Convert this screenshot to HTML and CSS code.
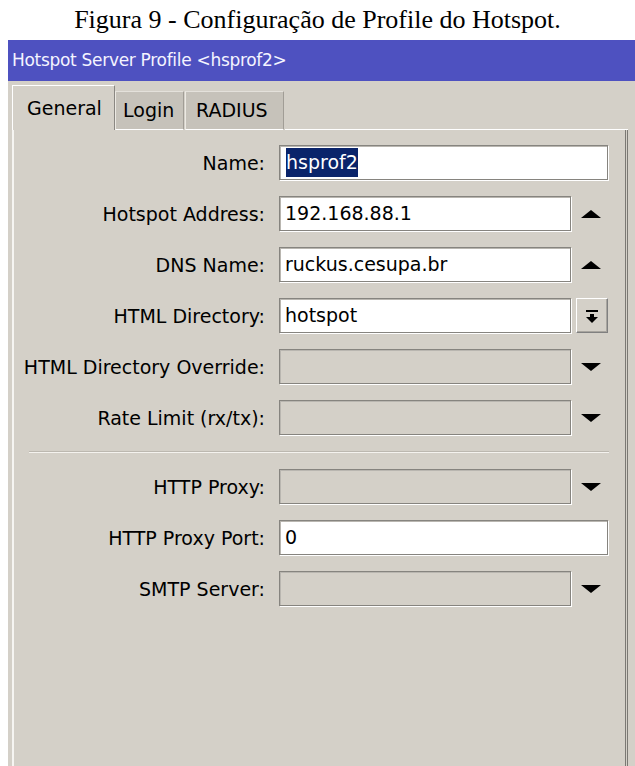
FILE: index.html
```html
<!DOCTYPE html>
<html lang="pt">
<head>
<meta charset="utf-8">
<title>Hotspot Server Profile</title>
<link rel="stylesheet" href="styles.css">
</head>
<body>
<p class="caption">Figura 9 - Configuração de Profile do Hotspot.</p>
<div class="window">
  <div class="titlebar">Hotspot Server Profile &lt;hsprof2&gt;</div>
  <div class="tabs">
    <div class="tab active">General</div>
    <div class="tab">Login</div>
    <div class="tab">RADIUS</div>
    <div class="tab-fill"></div>
  </div>
  <div class="panel">
    <div class="rows">
      <div class="row">
        <span class="label">Name:</span>
        <div class="field wide"><span class="sel">hsprof2</span></div>
      </div>
      <div class="row">
        <span class="label">Hotspot Address:</span>
        <div class="field">192.168.88.1</div>
        <div class="side"><span class="tri up"></span></div>
      </div>
      <div class="row">
        <span class="label">DNS Name:</span>
        <div class="field">ruckus.cesupa.br</div>
        <div class="side"><span class="tri up"></span></div>
      </div>
      <div class="row">
        <span class="label">HTML Directory:</span>
        <div class="field">hotspot</div>
        <div class="side">
          <button class="btn" type="button">
            <svg width="14" height="16" viewBox="0 0 14 16">
              <rect x="1" y="2" width="12" height="2" fill="#000"/>
              <rect x="5" y="6" width="4" height="3" fill="#000"/>
              <polygon points="1,9 13,9 7,15" fill="#000"/>
            </svg>
          </button>
        </div>
      </div>
      <div class="row">
        <span class="label">HTML Directory Override:</span>
        <div class="field off"></div>
        <div class="side"><span class="tri down"></span></div>
      </div>
      <div class="row">
        <span class="label">Rate Limit (rx/tx):</span>
        <div class="field off"></div>
        <div class="side"><span class="tri down"></span></div>
      </div>
    </div>
    <div class="sep"></div>
    <div class="rows">
      <div class="row">
        <span class="label">HTTP Proxy:</span>
        <div class="field off"></div>
        <div class="side"><span class="tri down"></span></div>
      </div>
      <div class="row">
        <span class="label">HTTP Proxy Port:</span>
        <div class="field wide">0</div>
      </div>
      <div class="row">
        <span class="label">SMTP Server:</span>
        <div class="field off"></div>
        <div class="side"><span class="tri down"></span></div>
      </div>
    </div>
  </div>
</div>
</body>
</html>
```

FILE: styles.css
```css
html, body {
  margin: 0;
  padding: 0;
  background: #fff;
  overflow: hidden;
}

body {
  width: 635px;
  height: 766px;
}

.caption {
  margin: 0;
  height: 40px;
  line-height: 40px;
  text-align: center;
  font-family: "Liberation Serif", "Times New Roman", serif;
  font-size: 26px;
  color: #000;
}

.window {
  margin-left: 8px;
  height: 726px;
  background: #d4d0c8;
  font-family: "DejaVu Sans", Tahoma, sans-serif;
  font-size: 19px;
  color: #000;
  display: flex;
  flex-direction: column;
}

.titlebar {
  height: 41px;
  line-height: 41px;
  padding-left: 4px;
  background: #4e51c0;
  color: #f4f4ff;
  font-size: 17px;
  letter-spacing: -0.3px;
  white-space: nowrap;
}

/* tab strip */
.tabs {
  display: flex;
  align-items: flex-end;
  height: 45px;
  margin-top: 4px;
  padding-left: 4px;
}

.tab {
  box-sizing: border-box;
  height: 39px;
  line-height: 36px;
  padding: 0 9px;
  background: #c6c2ba;
  border-top: 1px solid #e4e1db;
  border-left: 1px solid #ece9e3;
  border-right: 1px solid #a19d96;
  border-bottom: 1px solid #fff;
  margin-right: 1px;
}

.tab:nth-child(2) { width: 69px; padding: 0 7px; }
.tab:nth-child(3) { width: 99px; padding: 0 0 0 10px; }

.tab.active {
  width: 103px;
  height: 45px;
  line-height: 44px;
  padding: 0 0 0 14px;
  background: #d4d0c8;
  border-top: 1px solid #fff;
  border-left: 1px solid #fff;
  border-right: 1px solid #8a8782;
  border-bottom: none;
  margin-right: 0;
}

.tab-fill {
  flex: 1;
  height: 0;
  border-bottom: 1px solid #fff;
  margin-right: 7px;
}

/* tab page */
.panel {
  flex: 1;
  margin: 0 7px 0 4px;
  padding-top: 15px;
  border-left: 2px solid #f6f5f2;
  border-right: 3px double #7b7974;
}

.rows {
  display: flex;
  flex-direction: column;
  gap: 16px;
}

.row {
  display: flex;
  align-items: center;
  height: 35px;
}

.label {
  width: 253px;
  margin-left: -2px;
  margin-right: 14px;
  text-align: right;
  white-space: nowrap;
}

.field {
  box-sizing: border-box;
  width: 292px;
  height: 35px;
  line-height: 33px;
  padding-left: 5px;
  background: #fff;
  border: 1px solid #86847f;
  box-shadow: inset 1px 1px 0 #b9b6b0, 1px 1px 0 #fff;
  white-space: nowrap;
  overflow: hidden;
}

.field.wide {
  width: 329px;
}

.field.off {
  background: #d4d0c8;
}

.sel {
  display: inline-block;
  margin-left: 1px;
  line-height: 29px;
  background: #0a246a;
  color: #fff;
  vertical-align: top;
  margin-top: 2px;
}

.side {
  width: 37px;
  height: 35px;
  display: flex;
  align-items: center;
  justify-content: center;
}

.tri {
  width: 0;
  height: 0;
  border-left: 10px solid transparent;
  border-right: 10px solid transparent;
  margin-left: 3px;
}

.tri.up {
  border-bottom: 8px solid #000;
}

.tri.down {
  border-top: 8px solid #000;
}

.btn {
  box-sizing: border-box;
  width: 32px;
  height: 35px;
  margin-left: 4px;
  padding: 0;
  background: #d4d0c8;
  border: 1px solid;
  border-color: #fff #808080 #808080 #fff;
  box-shadow: inset -1px -1px 0 #a8a59f;
  display: flex;
  align-items: center;
  justify-content: center;
}

.sep {
  margin: 16px 16px 16px 15px;
  border-top: 1px solid #bcb8b0;
  border-bottom: 1px solid #f4f2ee;
}
```
